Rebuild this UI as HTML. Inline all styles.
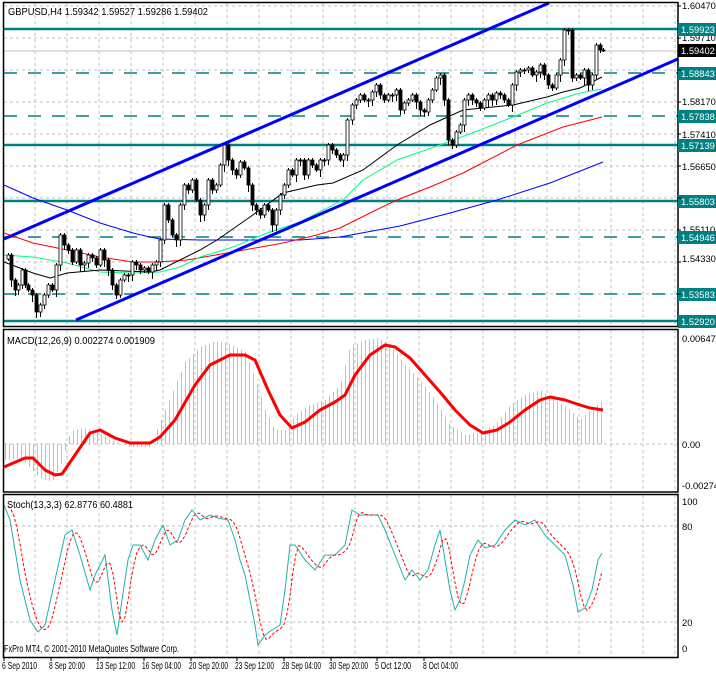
<!DOCTYPE html>
<html><head><meta charset="utf-8"><style>
html,body{margin:0;padding:0;background:#fff;width:716px;height:673px;overflow:hidden}
svg{display:block;font-family:"Liberation Sans",sans-serif;font-size:9.4px}
</style></head><body>
<svg id="s" width="716" height="673" viewBox="0 0 716 673" xmlns="http://www.w3.org/2000/svg">
<rect width="716" height="673" fill="#fff"/>
<g id="grid" stroke="#c0c0c0" stroke-dasharray="3,3" stroke-width="1"></g>
<g stroke="#008080" stroke-width="2.5">
<line x1="4" y1="29" x2="678" y2="29"/>
<line x1="4" y1="145" x2="678" y2="145"/>
<line x1="4" y1="201" x2="678" y2="201"/>
<line x1="4" y1="321" x2="678" y2="321"/>
</g>
<g stroke="#008080" stroke-width="1.5" stroke-dasharray="13,11">
<line x1="4" y1="73" x2="678" y2="73"/>
<line x1="4" y1="116" x2="678" y2="116"/>
<line x1="4" y1="237" x2="678" y2="237"/>
<line x1="4" y1="294" x2="678" y2="294"/>
</g>
<line x1="4" y1="51" x2="678" y2="51" stroke="#c0c0c0"/>
<polyline fill="none" stroke="#0000ff" stroke-width="1" points="4,185 33,198 67,210 100,223 133,233 150,237 160,239 200,240 300,240 340,237 400,226 450,213 497,200 550,183 603,162"/>
<polyline fill="none" stroke="#ff0000" stroke-width="1" points="4,233 33,243 67,250 100,257 133,262 157,262 187,260 233,252 283,243 317,235 340,228 370,213 397,200 430,187 463,173 517,145 563,127 602,117"/>
<polyline fill="none" stroke="#00ff7f" stroke-width="1" points="4,255 33,257 67,263 100,272 133,273 160,272 180,267 200,257 233,247 267,233 300,222 343,200 363,180 397,160 440,145 480,130 513,117 547,103 580,93 602,89"/>
<polyline fill="none" stroke="#000" stroke-width="1" points="4,262 33,273 50,278 67,273 100,270 150,272 160,270 200,250 217,240 250,217 283,193 317,185 333,183 363,170 397,145 430,125 463,110 513,105 547,97 563,92 580,88 602,77"/>
<g id="candles"></g>
<g stroke="#0000ff" stroke-width="3">
<line x1="4" y1="239" x2="549" y2="3"/>
<line x1="76" y1="320" x2="678" y2="59"/>
</g>
<g id="hist" stroke="#c0c0c0" stroke-width="1"></g>
<polyline fill="none" stroke="#ff0000" stroke-width="3" stroke-linejoin="round" points="4,467 25,458 33,458 45,470 55,475 62,474 75,455 90,433 100,430 115,438 130,443 150,443 160,437 175,420 195,385 210,365 230,355 245,355 255,360 268,390 280,415 292,428 305,422 320,410 335,402 345,395 355,375 370,355 385,345 395,347 410,358 425,375 440,392 455,410 470,425 483,433 497,430 510,422 525,410 540,400 550,397 565,400 580,405 590,408 603,410"/>
<polyline id="st" fill="none" stroke="#20b2aa" stroke-width="1" points=""/>
<polyline id="sg" fill="none" stroke="#ff0000" stroke-width="1" stroke-dasharray="3,2" points=""/>
<g fill="none" stroke="#000" stroke-width="1.5">
<rect x="3.5" y="2.5" width="674.5" height="324"/>
<rect x="3.5" y="329.5" width="674.5" height="162.5"/>
<rect x="3.5" y="494.5" width="674.5" height="163"/>
</g>
<g fill="#000" font-size="10.5">
<text x="8" y="15" textLength="200" lengthAdjust="spacingAndGlyphs">GBPUSD,H4  1.59342 1.59527 1.59286 1.59402</text>
<text x="7" y="344" textLength="148" lengthAdjust="spacingAndGlyphs">MACD(12,26,9) 0.002274 0.001909</text>
<text x="7" y="508" textLength="126" lengthAdjust="spacingAndGlyphs">Stoch(13,3,3) 62.8776 60.4881</text>
<text x="4" y="652" textLength="175" lengthAdjust="spacingAndGlyphs">FxPro MT4, © 2001-2010 MetaQuotes Software Corp.</text>
</g>
<g fill="#000">
<text x="682" y="9">1.60470</text>
<text x="682" y="41">1.59710</text>
<text x="682" y="105">1.58170</text>
<text x="682" y="138">1.57410</text>
<text x="682" y="170">1.56650</text>
<text x="682" y="233">1.55110</text>
<text x="682" y="262">1.54330</text>
<text x="682" y="342">0.00647</text>
<text x="682" y="448">0.00</text>
<text x="682" y="489">-0.00274</text>
<text x="682" y="505">100</text>
<text x="682" y="530">80</text>
<text x="682" y="626">20</text>
<text x="682" y="652">0</text>
</g>
<g id="lab"></g>
<rect x="678" y="44" width="38" height="13" fill="#000"/>
<text x="681" y="54" fill="#fff">1.59402</text>
<g fill="#000" font-size="10.5">
<text x="2" y="669" textLength="35" lengthAdjust="spacingAndGlyphs">6 Sep 2010</text>
<text x="49" y="669" textLength="36" lengthAdjust="spacingAndGlyphs">8 Sep 20:00</text>
<text x="96" y="669" textLength="39" lengthAdjust="spacingAndGlyphs">13 Sep 12:00</text>
<text x="142" y="669" textLength="39" lengthAdjust="spacingAndGlyphs">16 Sep 04:00</text>
<text x="189" y="669" textLength="39" lengthAdjust="spacingAndGlyphs">20 Sep 20:00</text>
<text x="235" y="669" textLength="39" lengthAdjust="spacingAndGlyphs">23 Sep 12:00</text>
<text x="282" y="669" textLength="39" lengthAdjust="spacingAndGlyphs">28 Sep 04:00</text>
<text x="329" y="669" textLength="39" lengthAdjust="spacingAndGlyphs">30 Sep 20:00</text>
<text x="375" y="669" textLength="36" lengthAdjust="spacingAndGlyphs">5 Oct 12:00</text>
<text x="423" y="669" textLength="35" lengthAdjust="spacingAndGlyphs">8 Oct 04:00</text>
</g>
<g id="ticks" stroke="#000"></g>
</svg>
<script>
(function(){
var NS="http://www.w3.org/2000/svg";
function el(p,t,a){var e=document.createElementNS(NS,t);for(var k in a)e.setAttribute(k,a[k]);p.appendChild(e);return e;}
var g=document.getElementById('grid');
for(var x=35;x<678;x+=32){el(g,'line',{x1:x,y1:3,x2:x,y2:326});el(g,'line',{x1:x,y1:330,x2:x,y2:492});el(g,'line',{x1:x,y1:495,x2:x,y2:657});}
for(var y=6;y<326;y+=32)el(g,'line',{x1:4,y1:y,x2:678,y2:y});
[444,526,622].forEach(function(y){el(g,'line',{x1:4,y1:y,x2:678,y2:y});});
var lab=document.getElementById('lab');
[[29,'1.59923'],[73,'1.58843'],[116,'1.57838'],[145,'1.57139'],[201,'1.55803'],[237,'1.54946'],[294,'1.53583'],[321,'1.52920']].forEach(function(l){
el(lab,'rect',{x:678,y:l[0]-6,width:38,height:13,fill:'#008080'});var t=el(lab,'text',{x:681,y:l[0]+4,fill:'#fff'});t.textContent=l[1];});
var tk=document.getElementById('ticks');
[4,51,98,144,191,237,284,331,377,424].forEach(function(x){el(tk,'line',{x1:x,y1:657,x2:x,y2:661});});
for(var y=6;y<326;y+=32)el(tk,'line',{x1:678,y1:y,x2:681,y2:y});
var c=[[8,255],[11,280],[15,290],[18,285],[22,270],[25,285],[28,290],[32,295],[36,312],[40,305],[44,295],[48,285],[52,290],[56,265],[60,235],[64,245],[68,250],[72,262],[76,250],[80,265],[84,263],[88,255],[92,258],[96,265],[100,250],[104,260],[108,270],[112,285],[116,295],[120,280],[124,275],[128,275],[132,262],[136,265],[140,270],[144,268],[148,272],[152,265],[156,262],[160,240],[164,205],[168,220],[172,235],[176,240],[180,205],[184,185],[188,190],[192,180],[196,200],[200,215],[204,205],[208,180],[212,190],[216,185],[220,165],[224,145],[228,160],[232,170],[236,175],[240,162],[244,168],[248,185],[252,205],[256,210],[260,215],[264,205],[268,210],[272,225],[276,210],[280,195],[284,185],[288,170],[292,175],[296,160],[300,160],[304,175],[308,160],[312,165],[316,170],[320,160],[324,160],[328,145],[332,150],[336,155],[340,160],[343,155],[347,120],[352,105],[356,100],[360,95],[364,100],[368,100],[372,92],[376,85],[380,95],[384,100],[388,95],[392,95],[396,90],[400,110],[404,103],[408,100],[412,95],[416,102],[420,110],[424,112],[428,100],[432,90],[436,78],[440,75],[444,100],[448,140],[452,145],[456,132],[460,125],[464,100],[468,95],[472,100],[476,103],[480,108],[484,100],[488,95],[492,100],[496,93],[500,95],[504,100],[508,105],[512,85],[516,72],[520,70],[524,70],[528,68],[532,75],[536,72],[540,65],[544,75],[548,85],[552,88],[556,75],[560,60],[564,30],[568,30],[572,78],[576,75],[580,78],[584,70],[588,85],[592,75],[596,45],[600,50],[603,50]];
var cg=document.getElementById('candles');var prev=c[0][1]+4;
for(var i=0;i<c.length;i++){var cx=c[i][0],cl=c[i][1],op=prev;var tp=Math.min(op,cl),bt=Math.max(op,cl);
var w1=2+(i*7%7),w2=2+(i*5%6);
el(cg,'line',{x1:cx+0.5,y1:tp-w1,x2:cx+0.5,y2:bt+w2,stroke:'#000'});
if(bt-tp<1)bt=tp+1;
el(cg,'rect',{x:cx-1,y:tp,width:3,height:bt-tp,fill:cl<op?'#fff':'#000',stroke:'#000','stroke-width':0.8});prev=cl;}
var hp=[[4,460],[20,458],[40,478],[52,482],[62,462],[70,432],[80,428],[95,430],[110,440],[130,447],[150,447],[160,422],[170,398],[185,362],[200,347],[215,341],[230,344],[245,352],[255,378],[265,410],[275,430],[285,430],[295,415],[310,405],[325,400],[340,385],[350,346],[365,340],[378,338],[390,345],[405,365],[420,380],[435,400],[450,425],[465,435],[480,432],[495,425],[510,405],[525,395],[540,390],[555,400],[570,410],[580,420],[590,410],[603,400]];
function interp(p,x){for(var i=0;i<p.length-1;i++){if(x>=p[i][0]&&x<=p[i+1][0]){var t=(x-p[i][0])/(p[i+1][0]-p[i][0]);return p[i][1]+t*(p[i+1][1]-p[i][1]);}}return x<p[0][0]?p[0][1]:p[p.length-1][1];}
var hg=document.getElementById('hist');
for(var x=5;x<=604;x+=4){var v=interp(hp,x);el(hg,'line',{x1:x+0.5,y1:444,x2:x+0.5,y2:v});}
var sp=[[4,505],[10,520],[20,580],[30,620],[38,632],[45,625],[55,580],[65,535],[72,530],[80,555],[90,590],[95,575],[105,555],[112,610],[117,635],[122,600],[128,560],[133,545],[140,545],[148,560],[155,540],[163,525],[170,545],[178,540],[185,520],[192,510],[200,520],[210,515],[218,518],[228,520],[235,540],[240,560],[245,575],[250,600],[255,625],[258,645],[265,635],[272,630],[280,625],[285,590],[290,545],[295,545],[305,560],[315,570],[325,555],[335,555],[345,545],[352,510],[360,515],[370,515],[378,515],[385,530],[395,555],[405,580],[412,570],[420,580],[428,570],[435,545],[440,530],[445,560],[450,590],[455,610],[460,600],[465,580],[470,555],[478,540],[485,548],[495,545],[505,530],[515,520],[525,525],[535,520],[545,535],[555,545],[565,555],[573,585],[578,612],[585,608],[592,590],[598,560],[602,553]];
document.getElementById('st').setAttribute('points',sp.map(function(p){return p.join(',')}).join(' '));
var sg=[];for(var x=8;x<=603;x+=3){var a=(interp(sp,x-3)+interp(sp,x-6)+interp(sp,x-9))/3;sg.push(x+','+a.toFixed(1));}
document.getElementById('sg').setAttribute('points',sg.join(' '));
})();
</script>
</body></html>
